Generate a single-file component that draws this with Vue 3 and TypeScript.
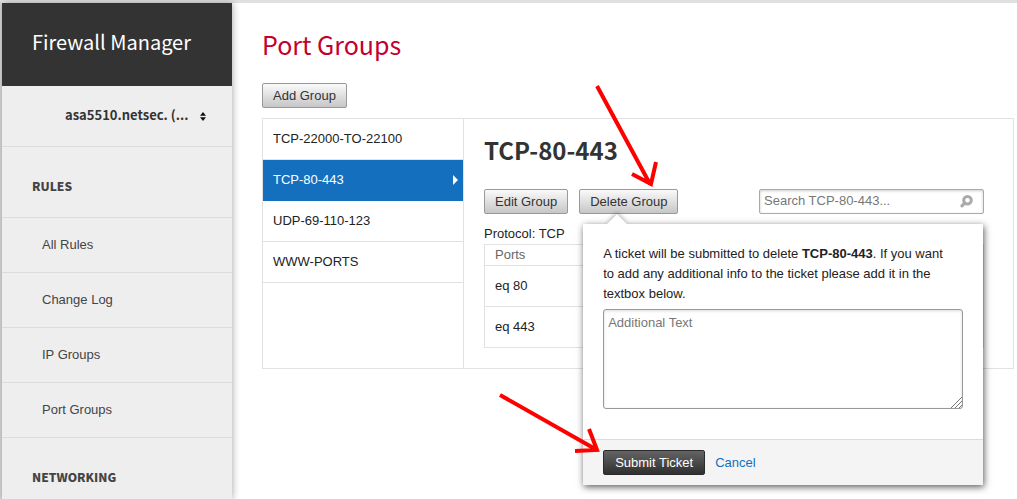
<script setup lang="ts">
import { ref } from 'vue'

const device = ref('asa5510')
const rules: string[] = ['All Rules', 'Change Log', 'IP Groups', 'Port Groups']
const groups: string[] = ['TCP-22000-TO-22100', 'TCP-80-443', 'UDP-69-110-123', 'WWW-PORTS']
const selected = ref('TCP-80-443')
const ports: string[] = ['eq 80', 'eq 443']
const query = ref('')
const note = ref('')
const popoverOpen = ref(true)
</script>

<template>
  <div class="page">
    <aside class="sidebar">
      <h1 class="brand">Firewall Manager</h1>
      <div class="device">
        <select v-model="device" aria-label="Device">
          <option value="asa5510">asa5510.netsec. (...</option>
        </select>
        <svg class="updown" width="6" height="9" viewBox="0 0 6 9" aria-hidden="true">
          <path d="M0 3.7 L3 0 L6 3.7Z M0 5.3 L3 9 L6 5.3Z" fill="#111" />
        </svg>
      </div>
      <nav>
        <h2 class="section">Rules</h2>
        <a v-for="item in rules" :key="item" class="nav-item" href="#">{{ item }}</a>
        <h2 class="section last">Networking</h2>
      </nav>
    </aside>

    <main class="main">
      <h1 class="title">Port Groups</h1>
      <button type="button" class="btn">Add Group</button>

      <div class="panel">
        <ul class="groups">
          <li v-for="g in groups" :key="g">
            <button type="button" class="group" :class="{ active: g === selected }" @click="selected = g">
              <span>{{ g }}</span>
              <svg v-if="g === selected" width="5" height="10" viewBox="0 0 5 10" aria-hidden="true">
                <path d="M0 0 L5 5 L0 10Z" fill="#fff" />
              </svg>
            </button>
          </li>
        </ul>

        <section class="detail">
          <h2 class="detail-title">{{ selected }}</h2>
          <div class="toolbar">
            <button type="button" class="btn">Edit Group</button>
            <div class="anchor">
              <button type="button" class="btn" @click="popoverOpen = !popoverOpen">Delete Group</button>
              <form v-if="popoverOpen" class="popover" @submit.prevent="popoverOpen = false">
                <div class="popover-body">
                  <p>
                    A ticket will be submitted to delete <strong>{{ selected }}</strong>. If you want to add any
                    additional info to the ticket please add it in the textbox below.
                  </p>
                  <div class="note">
                    <textarea v-model="note" aria-label="Additional Text" placeholder="Additional Text"></textarea>
                    <svg class="grip" width="11" height="11" viewBox="0 0 11 11" aria-hidden="true">
                      <path d="M0 11 L11 0 M4 11 L11 4 M8 11 L11 8" stroke="#777" fill="none" />
                    </svg>
                  </div>
                </div>
                <div class="popover-foot">
                  <button type="submit" class="btn dark">Submit Ticket</button>
                  <a href="#" @click.prevent="popoverOpen = false">Cancel</a>
                </div>
              </form>
            </div>
            <div class="search">
              <input v-model="query" type="text" aria-label="Search group" :placeholder="`Search ${selected}...`" />
              <svg width="13" height="13" viewBox="0 0 13 13" aria-hidden="true">
                <circle cx="7.5" cy="5.3" r="3.8" fill="none" stroke="#aaa" stroke-width="3" />
                <path d="M4.6 8.2 L2 10.8" stroke="#aaa" stroke-width="3.2" stroke-linecap="round" />
              </svg>
            </div>
          </div>
          <p class="protocol">Protocol: TCP</p>
          <table class="ports">
            <thead>
              <tr><th>Ports</th></tr>
            </thead>
            <tbody>
              <tr v-for="p in ports" :key="p"><td>{{ p }}</td></tr>
            </tbody>
          </table>
        </section>
      </div>
    </main>

    <svg class="marks" width="180" height="380" viewBox="490 80 180 380" aria-hidden="true">
      <g fill="none" stroke="#f00" stroke-width="4">
        <path d="M597 86 L650 184 M632 174 L651 184 L656 162" />
        <path d="M500 395 L597 450 M575 451 L597 450 L589 429" />
      </g>
    </svg>
  </div>
</template>

<style>
body {
  margin: 0;
  background: #fff;
}
</style>

<style scoped>
* {
  box-sizing: border-box;
}
.page {
  position: relative;
  display: flex;
  min-height: 100vh;
  border-top: 3px solid #e0e0e0;
  border-left: 2px solid #d5d5d5;
  font: 13px/20px "Liberation Sans", Arial, sans-serif;
  color: #222;
}
h1, h2, p, ul {
  margin: 0;
  padding: 0;
}
.sidebar {
  flex: 0 0 230px;
  background: #eee;
  box-shadow: 1px 0 7px rgba(0, 0, 0, 0.3);
}
.brand {
  padding: 24px 30px 29px;
  background: #333;
  color: #fff;
  font: 400 20px/30px "Noto Sans CJK SC", sans-serif;
}
.device {
  display: flex;
  align-items: center;
  height: 61px;
  padding: 0 26px 0 63px;
  border-bottom: 1px solid #dcdcdc;
}
.device select {
  flex: 1;
  min-width: 0;
  height: 30px;
  padding: 0 0 2px;
  border: 0;
  background: none;
  appearance: none;
  color: #333;
  font: 700 13px/20px "Noto Sans CJK SC", sans-serif;
}
.section {
  padding: 29px 30px 21px;
  border-bottom: 1px solid #dcdcdc;
  color: #444;
  font: 900 12px/20px "Noto Sans CJK SC", sans-serif;
  text-transform: uppercase;
}
.section.last {
  padding-bottom: 10px;
  border-bottom: 0;
}
.nav-item {
  display: block;
  padding: 17px 40px;
  border-bottom: 1px solid #dcdcdc;
  color: #444;
  text-decoration: none;
}
.main {
  flex: 1;
  min-width: 0;
  padding: 21px 3px 0 30px;
}
.title {
  margin-bottom: 19px;
  color: #c3002f;
  font: 400 25px/40px "Noto Sans CJK SC", sans-serif;
}
.btn {
  display: block;
  height: 25px;
  padding: 1px 10px 0;
  border: 1px solid #999;
  border-radius: 2px;
  background: linear-gradient(#fafafa, #c6c6c6);
  color: #333;
  font: 13px/22px "Liberation Sans", Arial, sans-serif;
  white-space: nowrap;
}
.btn.dark {
  padding: 1px 11px 0;
  border-color: #2b2b2b;
  background: linear-gradient(#646464, #303030);
  color: #fff;
}
.panel {
  display: flex;
  min-height: 251px;
  margin-top: 10px;
  border: 1px solid #e2e2e2;
}
.groups {
  flex: 0 0 201px;
  border-right: 1px solid #e2e2e2;
  list-style: none;
}
.group {
  display: flex;
  align-items: center;
  justify-content: space-between;
  width: 100%;
  height: 41px;
  padding: 0 5px 0 10px;
  border: 0;
  border-bottom: 1px solid #e2e2e2;
  background: #fff;
  color: #222;
  font: 13px/20px "Liberation Sans", Arial, sans-serif;
}
.group.active {
  border-color: #146fbf;
  background: #146fbf;
  color: #fff;
}
.detail {
  flex: 1;
  min-width: 0;
  padding: 11px 29px 20px 20px;
}
.detail-title {
  margin-bottom: 19px;
  color: #333;
  font: 700 24px/40px "Noto Sans CJK SC", sans-serif;
}
.toolbar {
  display: flex;
  gap: 11px;
}
.anchor {
  position: relative;
}
.search {
  display: flex;
  align-items: center;
  width: 225px;
  height: 25px;
  margin-left: auto;
  padding: 0 10px 0 4px;
  border: 1px solid #aaa;
  border-radius: 2px;
  box-shadow: inset 0 1px 3px rgba(0, 0, 0, 0.2);
}
.search input {
  flex: 1;
  min-width: 0;
  height: 23px;
  padding: 0 0 2px;
  border: 0;
  outline: 0;
  background: none;
  font: 13px/20px "Liberation Sans", Arial, sans-serif;
}
.protocol {
  margin-top: 10px;
}
.ports {
  width: 100%;
  border-collapse: collapse;
}
.ports th,
.ports td {
  height: 41px;
  padding: 0 10px;
  border: 1px solid #e2e2e2;
  text-align: left;
}
.ports th {
  height: 21px;
  color: #666;
  font-weight: 400;
}
.popover {
  position: absolute;
  z-index: 2;
  top: 35px;
  left: 4px;
  width: 400px;
  background: #fff;
  box-shadow: 1px 2px 7px rgba(0, 0, 0, 0.65);
}
.popover::before {
  content: "";
  position: absolute;
  top: -10px;
  left: 24px;
  border: solid transparent;
  border-width: 0 10px 10px;
  border-bottom-color: #fff;
  filter: drop-shadow(0 -1px 2px rgba(0, 0, 0, 0.35));
  clip-path: inset(-10px -10px 0);
}
.popover-body {
  padding: 20px 20px 30px;
}
.popover-body p {
  padding-right: 8px;
}
.note {
  position: relative;
  margin-top: 5px;
}
.note textarea {
  display: block;
  width: 100%;
  height: 100px;
  padding: 3px 4px;
  border: 1px solid #999;
  border-radius: 3px;
  outline: 0;
  box-shadow: inset 0 1px 3px rgba(0, 0, 0, 0.15);
  resize: none;
  font: 13px/20px "Liberation Sans", Arial, sans-serif;
}
::placeholder {
  color: #777;
  opacity: 1;
}
.grip {
  position: absolute;
  right: 1px;
  bottom: 1px;
}
.popover-foot {
  display: flex;
  align-items: center;
  gap: 10px;
  padding: 10px 20px;
  border-top: 1px solid #dcdcdc;
  background: #f4f4f4;
}
.popover-foot a {
  color: #146fbf;
  text-decoration: none;
}
.marks {
  position: absolute;
  z-index: 3;
  top: 77px;
  left: 488px;
  pointer-events: none;
}
</style>
